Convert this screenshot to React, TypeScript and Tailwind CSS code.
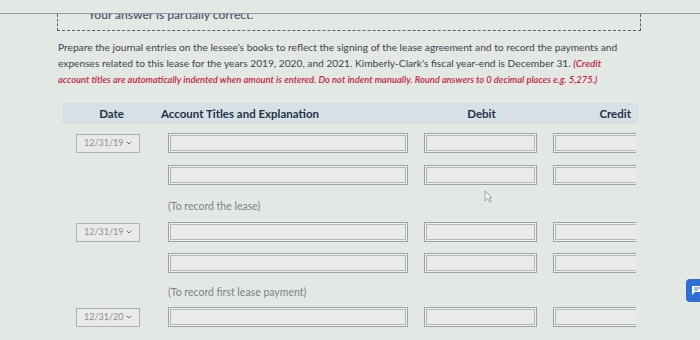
import { ChevronDown } from 'lucide-react'

type Item = { kind: 'row'; date?: string; mt: string } | { kind: 'memo'; text: string; mt: string }

const items: Item[] = [
  { kind: 'row', date: '12/31/19', mt: 'mt-[9px]' },
  { kind: 'row', mt: 'mt-[12px]' },
  { kind: 'memo', text: '(To record the lease)', mt: 'mt-[14px]' },
  { kind: 'row', date: '12/31/19', mt: 'mt-[9px]' },
  { kind: 'row', mt: 'mt-[11px]' },
  { kind: 'memo', text: '(To record first lease payment)', mt: 'mt-[12px]' },
  { kind: 'row', date: '12/31/20', mt: 'mt-[8px]' },
]

function Field({ className }: { className: string }) {
  return (
    <div
      className={`h-[20px] border border-[#9da3a1] bg-[#e8ebe9] shadow-[inset_0_0_0_1px_#eef0ee,inset_0_0_0_2px_#b3b8b5] ${className}`}
    />
  )
}

function DateSelect({ value }: { value: string }) {
  return (
    <div className="flex h-[19px] w-[64px] items-center justify-between border border-[#aab1ad] bg-[#e7eae8] pl-[7px] pr-[6px] text-[9px] text-[#8b9296]">
      <span>{value}</span>
      <ChevronDown className="h-[8px] w-[8px] text-[#5f6f86]" strokeWidth={3} />
    </div>
  )
}

function EntryRow({ date }: { date?: string }) {
  return (
    <div className="flex h-[20px] items-center pl-[76px]">
      <div className="w-[64px]">{date && <DateSelect value={date} />}</div>
      <Field className="ml-[28px] w-[240px]" />
      <Field className="ml-[16px] w-[113px]" />
      <div className="ml-[16px] w-[83px] overflow-hidden">
        <Field className="w-[100px]" />
      </div>
    </div>
  )
}

export default function App() {
  return (
    <div className="relative h-[340px] w-[700px] overflow-hidden bg-[#e4e8e5] font-['Lato','Noto_Sans',sans-serif]">
      {/* status box, cut off at the top */}
      <div className="h-[13px]" />
      <div className="h-[18px] border-t border-[#8d9bad] pl-[57px] pr-[59px]">
        <div className="h-full overflow-hidden border-x border-b border-dashed border-[#5b6068]">
          <div className="-mt-[6px] ml-[30px] text-[12px] font-semibold leading-[14px] text-[#4d5b70]">
            Your answer is partially correct.
          </div>
        </div>
      </div>

      {/* instructions */}
      <p className="mt-[8px] pl-[58px] text-[10.2px] leading-[16px] text-[#3d4450]">
        Prepare the journal entries on the lessee's books to reflect the signing of the lease agreement and to record the payments and
        <br />
        expenses related to this lease for the years 2019, 2020, and 2021. Kimberly-Clark's fiscal year-end is December 31.{' '}
        <span className="text-[10px] font-semibold italic text-[#c3243f]">(Credit</span>
        <br />
        <span className="text-[9.4px] font-semibold italic text-[#c3243f]">
          account titles are automatically indented when amount is entered. Do not indent manually. Round answers to 0 decimal places e.g. 5,275.)
        </span>
      </p>

      {/* table header */}
      <div className="mx-[62px] mt-[15px] flex h-[21px] items-center bg-[#d7e1e5] text-[11.5px] font-bold text-[#24314a]">
        <div className="w-[99px] text-center">Date</div>
        <div className="w-[263px]">Account Titles and Explanation</div>
        <div className="w-[115px] text-center">Debit</div>
        <div className="w-[92px] text-right">Credit</div>
      </div>

      {/* entries */}
      <div>
        {items.map((it, i) =>
          it.kind === 'memo' ? (
            <div key={i} className={`${it.mt} h-[14px] pl-[168px] text-[10.5px] leading-[14px] text-[#7b8286]`}>
              {it.text}
            </div>
          ) : (
            <div key={i} className={it.mt}>
              <EntryRow date={it.date} />
            </div>
          )
        )}
      </div>

      {/* mouse cursor */}
      <svg className="absolute left-[484px] top-[190px]" width="9" height="13" viewBox="0 0 9 13">
        <path d="M1 1 L1 11 L3.5 8.5 L5.5 12 L7 11.3 L5 7.8 L8 7.8 Z" fill="#f4f6f5" stroke="#8a9092" strokeWidth="0.8" />
      </svg>

      {/* help chat button */}
      <div className="absolute left-[686px] top-[279px] flex h-[23px] w-[24px] items-center rounded-[4px] bg-[#2d6fd4] pl-[5px]">
        <svg width="12" height="11" viewBox="0 0 12 11">
          <path d="M1 1 H11 V7 H4 L1 10 Z" fill="#ffffff" />
          <path d="M3 3 H9 M3 5 H7" stroke="#2d6fd4" strokeWidth="0.9" />
        </svg>
      </div>
    </div>
  )
}
